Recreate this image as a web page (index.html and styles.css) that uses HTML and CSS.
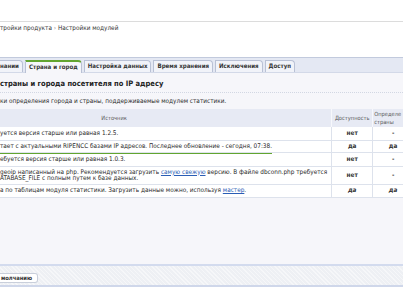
FILE: index.html
```html
<!DOCTYPE html>
<html lang="ru">
<head>
  <meta charset="UTF-8" />
  <title>Настройки модулей</title>
  <link rel="stylesheet" href="styles.css">
</head>
<body>
  <div class="topbar"></div>
  <div class="breadcrumb">тройки продукта <span class="sep">›</span> Настройки модулей</div>

  <div class="tabs">
    <div class="tab">нании</div>
    <div class="tab active">Страна и город</div>
    <div class="tab">Настройка данных</div>
    <div class="tab">Время хранения</div>
    <div class="tab">Исключения</div>
    <div class="tab">Доступ</div>
  </div>

  <div class="content">
    <h2 class="section-title">страны и города посетителя по IP адресу</h2>
    <p class="section-desc">ки определения города и страны, поддерживаемые модулем статистики.</p>

    <table class="sources">
      <thead>
        <tr>
          <th class="col-source">Источник</th>
          <th class="col-avail">Доступность</th>
          <th class="col-country">Определе<br>страны</th>
        </tr>
      </thead>
      <tbody>
        <tr class="r1">
          <td>уется версия старше или равная 1.2.5.</td>
          <td class="val">нет</td>
          <td class="val">-</td>
        </tr>
        <tr class="r2">
          <td><span class="current">тает с актуальными RIPENCC базами IP адресов. Последнее обновление - сегодня, 07:38.</span></td>
          <td class="val">да</td>
          <td class="val">да</td>
        </tr>
        <tr class="r3">
          <td>ебуется версия старше или равная 1.0.3.</td>
          <td class="val">нет</td>
          <td class="val">-</td>
        </tr>
        <tr class="r4">
          <td>geoip написанный на php. Рекомендуется загрузить <a href="#">самую свежую</a> версию. В файле dbconn.php требуется<br>ATABASE_FILE с полным путем к базе данных.</td>
          <td class="val">нет</td>
          <td class="val">-</td>
        </tr>
        <tr class="r5">
          <td>а по таблицам модуля статистики. Загрузить данные можно, используя <a href="#">мастер</a>.</td>
          <td class="val em">да</td>
          <td class="val em">да</td>
        </tr>
      </tbody>
    </table>
  </div>

  <div class="footer">
    <button class="btn">молчанию</button>
  </div>
</body>
</html>
```

FILE: styles.css
```css
:root {
  --page-bg: #f6f6fa;
  --band: #e4e8f3;
  --band-line: #c2cadd;
  --row-line: #dde2ec;
  --text: #2a2a2a;
  --subtext: #5a5a5a;
  --green: #62a530;
  --link: #2a5db5;
}

* {
  box-sizing: border-box;
  margin: 0;
  padding: 0;
}

html, body {
  overflow: hidden;
}

body {
  font-family: "DejaVu Sans Condensed", "DejaVu Sans", sans-serif;
  font-size: 6.4px;
  color: var(--text);
  background: #fff;
  width: 403px;
  height: 294px;
}

.topbar {
  height: 22px;
  border-bottom: 1px solid #dcdcdc;
}

.breadcrumb {
  height: 35px;
  line-height: 12px;
  color: #333;
}

.breadcrumb .sep {
  color: #888;
}

/* Tabs */
.tabs {
  display: flex;
  align-items: flex-end;
  height: 16px;
  background: var(--band);
  border-top: 1px solid var(--band-line);
  border-bottom: 1px solid #d3d9e8;
  padding-right: 10px;
}

.tab {
  height: 12px;
  line-height: 10px;
  padding: 0 3px;
  margin-right: 2px;
  font-weight: bold;
  font-size: 6.1px;
  color: #333;
  background: #f1f3f9;
  border: 1px solid #b9c1d5;
  border-bottom: none;
  border-top-right-radius: 4px;
  white-space: nowrap;
}

.tab:first-child {
  padding-left: 0;
  border-left: none;
}

.tab.active {
  background: var(--page-bg);
  border-top: 2px solid var(--green);
  height: 13px;
  margin-bottom: -1px;
}

/* Content */
.content {
  background: var(--page-bg);
  height: 191px;
  padding-top: 5px;
}

.section-title {
  font-size: 7.5px;
  font-weight: bold;
  line-height: 12px;
  padding-bottom: 2px;
  border-bottom: 1px dotted #d2d7e3;
  color: #222;
}

.section-desc {
  line-height: 12px;
  margin-top: 2px;
}

.sources {
  margin-top: 2px;
  border-collapse: collapse;
  width: 414px;
  background: #fff;
}

.sources th {
  background: #e7eaf4;
  color: var(--subtext);
  font-weight: normal;
  font-size: 5.7px;
  line-height: 8px;
  height: 18px;
  text-align: center;
  border-right: 1px solid #f7f8fc;
  white-space: nowrap;
}

.sources th.col-source {
  width: 331px;
  padding-right: 103px;
}

.sources th.col-avail {
  width: 41px;
}

.sources th.col-country {
  text-align: left;
  padding-left: 1px;
}

.sources td {
  line-height: 6.5px;
  height: 13px;
  padding: 0 4px 0 0;
  border-bottom: 1px solid var(--row-line);
  border-right: 1px solid var(--row-line);
  vertical-align: middle;
  white-space: nowrap;
}

.sources tr.r2 td {
  height: 12.5px;
}

.sources tr.r3 td {
  height: 14px;
}

.sources tr.r4 td {
  height: 17.5px;
}

.sources td.val {
  text-align: center;
  font-weight: bold;
  padding: 0;
  color: #333;
}

.sources td.em {
  font-style: italic;
}

.current {
  display: inline-block;
  border-bottom: 1px solid var(--green);
  padding-bottom: 3px;
  margin-bottom: -6px;
}

.sources a {
  color: var(--link);
}

/* Footer */
.footer {
  height: 23px;
  border-top: 2px solid #d3dbee;
  border-bottom: 2px solid #cfd7ea;
  background-color: #eef0f4;
  background-image: repeating-linear-gradient(45deg, rgba(255,255,255,0.45) 0 1px, transparent 1px 3px);
  padding-top: 7px;
}

.btn {
  font-family: inherit;
  font-size: 5.8px;
  font-weight: bold;
  color: #333;
  background: #fff;
  border: 1px solid #c9cfdb;
  border-left: none;
  border-radius: 0 3px 3px 0;
  height: 10px;
  line-height: 8px;
  padding: 0 5px 0 1px;
}
```
